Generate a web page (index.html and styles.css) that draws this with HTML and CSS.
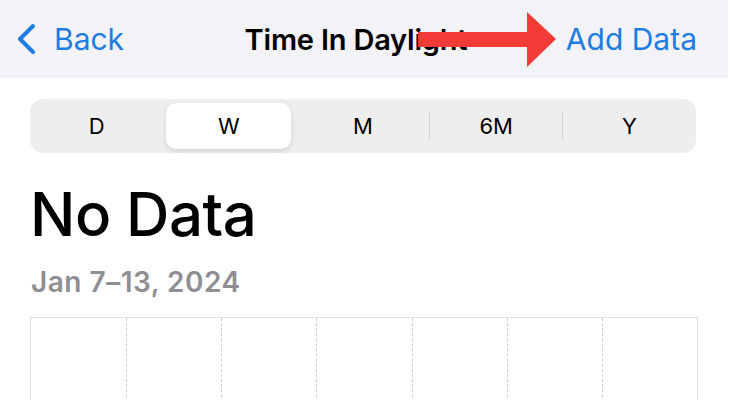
FILE: index.html
```html
<!DOCTYPE html>
<html>
    <head>
        <meta charset="UTF-8" />
        <link rel="stylesheet" href="styles.css">
    </head>
    <body>
        <div class="nav">
            <div class="back">
                <svg class="chevron" width="22" height="32" viewBox="0 0 22 32">
                    <path d="M18 3 L5 16 L18 29" fill="none" stroke="#1f7ce0" stroke-width="4" stroke-linecap="round" stroke-linejoin="round"/>
                </svg>
                <span>Back</span>
            </div>
            <div class="title">Time In Daylight</div>
            <div class="add">Add Data</div>

            <svg class="arrow" width="142" height="58" viewBox="0 0 142 58">
                <path d="M0 20 L109 20 L109 0 L138 27 L109 55 L109 35 L0 35 Z" fill="#f23a37"/>
            </svg>
        </div>

        <div class="seg">
            <div class="opt">D</div>
            <div class="opt on">W</div>
            <div class="opt">M</div>
            <div class="opt sep">6M</div>
            <div class="opt sep">Y</div>
        </div>

        <h1 class="big">No Data</h1>
        <div class="range">Jan 7–13, 2024</div>

        <div class="chart">
            <div class="col"></div>
            <div class="col"></div>
            <div class="col"></div>
            <div class="col"></div>
            <div class="col"></div>
            <div class="col"></div>
            <div class="col"></div>
        </div>
    </body>
</html>
```

FILE: styles.css
```css
body {
    margin: 0;
    background-color: white;
    font-family: Inter, "Liberation Sans", sans-serif;
    width: 730px;
    overflow: hidden;
}

.nav {
    position: relative;
    height: 78px;
    background-color: #f2f2f7;
    display: grid;
    grid-template-columns: 1fr auto 1fr;
    align-items: center;
    padding: 0 31px 0 15px;
    margin-right: 2px;
    box-sizing: border-box;
}

.back {
    display: flex;
    align-items: center;
    gap: 17px;
    color: #1f7ce0;
    font-size: 30px;
}

.title {
    font-size: 29px;
    font-weight: 600;
    color: black;
    letter-spacing: -0.2px;
}

.add {
    justify-self: end;
    color: #1f7ce0;
    font-size: 30px;
}

.arrow {
    position: absolute;
    left: 418px;
    top: 12px;
}

.seg {
    margin: 21px 34px 0 30px;
    height: 54px;
    background-color: #eeeeef;
    border-radius: 13px;
    display: grid;
    grid-template-columns: repeat(5, 1fr);
    padding: 4px 0;
    box-sizing: border-box;
}

.opt {
    display: flex;
    align-items: center;
    justify-content: center;
    font-size: 22px;
    font-weight: 400;
    color: black;
    position: relative;
}

.on {
    margin: 0 5px 0 3px;
    background-color: white;
    border-radius: 10px;
    box-shadow: 0 2px 5px rgba(0,0,0,0.12);
}

.sep::before {
    content: "";
    position: absolute;
    left: -1px;
    top: 9px;
    bottom: 9px;
    width: 1px;
    background-color: #d4d4d6;
}

.big {
    margin: 25px 0 0 30px;
    font-size: 60px;
    font-weight: 500;
    letter-spacing: -0.5px;
    line-height: 72px;
}

.range {
    margin: 15px 0 0 31px;
    font-size: 28px;
    font-weight: 600;
    letter-spacing: 0.5px;
    color: #8e8e93;
}

.chart {
    margin: 18px 32px 0 30px;
    height: 120px;
    border: 1px solid #dcdcdc;
    border-bottom: none;
    display: grid;
    grid-template-columns: repeat(7, 1fr);
}

.col + .col {
    border-left: 1px dashed #cfcfcf;
}
```
